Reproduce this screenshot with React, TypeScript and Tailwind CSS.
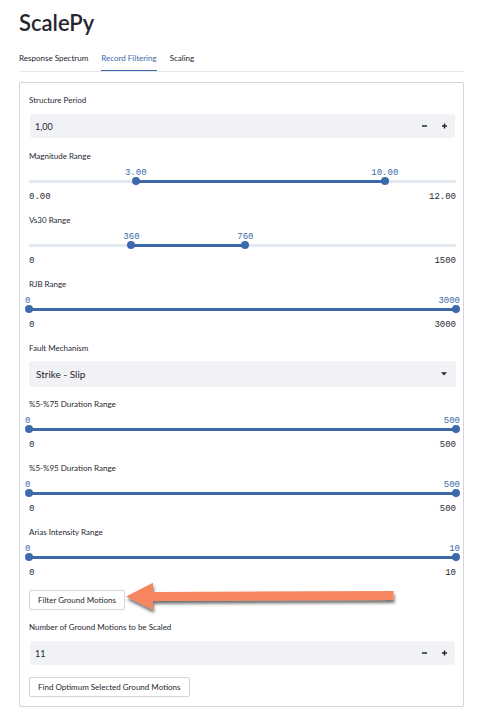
import { useState } from "react";
import type { ReactNode } from "react";

const tabs = ["Response Spectrum", "Record Filtering", "Scaling"];

function Label({ htmlFor, children }: { htmlFor?: string; children: ReactNode }) {
  return (
    <label htmlFor={htmlFor} className="block h-3 text-[8px] leading-3">
      {children}
    </label>
  );
}

function NumberField({ id, label, initial, decimals }: { id: string; label: string; initial: number; decimals: number }) {
  const [value, setValue] = useState(initial);
  return (
    <div className="flex flex-col gap-[7px]">
      <Label htmlFor={id}>{label}</Label>
      <div className="flex h-[26px] items-center overflow-hidden rounded border border-white bg-[#f0f2f6]">
        <input
          id={id}
          type="text"
          readOnly
          value={value.toFixed(decimals).replace(".", ",")}
          className="h-full min-w-0 flex-1 bg-transparent pl-[5px] text-[9px] outline-none"
        />
        <button type="button" aria-label="Decrease" onClick={() => setValue(value - 1)} className="flex h-full w-5 items-center justify-center">
          <svg viewBox="0 0 6 6" className="size-[6px]">
            <path d="M0 3h5" stroke="#262730" strokeWidth="1.4" />
          </svg>
        </button>
        <button type="button" aria-label="Increase" onClick={() => setValue(value + 1)} className="flex h-full w-5 items-center justify-center">
          <svg viewBox="0 0 6 6" className="size-[6px]">
            <path d="M0 3h5M2.500 0.500v5" stroke="#262730" strokeWidth="1.4" />
          </svg>
        </button>
      </div>
    </div>
  );
}

const thumbInput =
  "pointer-events-none absolute -left-1 top-0 h-2 w-[calc(100%+8px)] appearance-none bg-transparent [&::-webkit-slider-thumb]:pointer-events-auto [&::-webkit-slider-thumb]:size-2 [&::-webkit-slider-thumb]:appearance-none [&::-webkit-slider-thumb]:rounded-full [&::-webkit-slider-thumb]:bg-[#3c69ab]";

function ThumbValue({ percent, text }: { percent: number; text: string }) {
  if (percent <= 0) return <span className="absolute -left-1 top-0">{text}</span>;
  if (percent >= 100) return <span className="absolute -right-1 top-0">{text}</span>;
  return (
    <span className="absolute top-0 -translate-x-1/2" style={{ left: `${percent}%` }}>
      {text}
    </span>
  );
}

function RangeField({ id, label, max, from, to, decimals = 0 }: { id: string; label: string; max: number; from: number; to: number; decimals?: number }) {
  const [low, setLow] = useState(from);
  const [high, setHigh] = useState(to);
  const lowPercent = (low / max) * 100;
  const highPercent = (high / max) * 100;
  const step = decimals ? 0.01 : 1;
  return (
    <div>
      <Label htmlFor={id}>{label}</Label>
      <div className="relative mt-[5px] h-[10px] font-['Liberation_Mono',monospace] text-[9px] leading-3 text-[#3c69ab]">
        <ThumbValue percent={lowPercent} text={low.toFixed(decimals)} />
        <ThumbValue percent={highPercent} text={high.toFixed(decimals)} />
      </div>
      <div className="relative h-2">
        <div className="flex h-full items-center">
          <div className="h-[3px] w-full overflow-hidden rounded-sm bg-[#e3e7ef]">
            <div className="h-full bg-[#3c69ab]" style={{ marginLeft: `${lowPercent}%`, width: `${highPercent - lowPercent}%` }} />
          </div>
        </div>
        <input id={id} type="range" min={0} max={max} step={step} value={low} onChange={(e) => setLow(Math.min(Number(e.target.value), high))} className={thumbInput} />
        <input aria-label={`${label} maximum`} type="range" min={0} max={max} step={step} value={high} onChange={(e) => setHigh(Math.max(Number(e.target.value), low))} className={thumbInput} />
      </div>
      <div className="mt-[6px] flex h-3 justify-between font-['Liberation_Mono',monospace] text-[9px] leading-3">
        <span>{(0).toFixed(decimals)}</span>
        <span>{max.toFixed(decimals)}</span>
      </div>
    </div>
  );
}

function ActionButton({ children }: { children: ReactNode }) {
  return (
    <button type="button" className="h-5 rounded-xs border border-[#d4d5d8] bg-white px-2 text-[8px] leading-3 whitespace-nowrap">
      {children}
    </button>
  );
}

function PointerArrow() {
  return (
    <svg width="280" height="40" viewBox="0 0 280 40" className="pointer-events-none absolute -top-3 left-[94px]" aria-hidden="true">
      <defs>
        <filter id="arrow-shadow" x="-10%" y="-30%" width="120%" height="180%">
          <feDropShadow dx="1" dy="3" stdDeviation="1.6" floodColor="#000000" floodOpacity="0.55" />
        </filter>
      </defs>
      <path d="M3 18.500L30 4.800V14L270.500 13V22L30 23V32Z" fill="#f58661" filter="url(#arrow-shadow)" />
    </svg>
  );
}

export default function App() {
  const [active, setActive] = useState(1);
  return (
    <main className="bg-white px-[19px] pt-2 pb-[14px] font-[Lato,sans-serif] text-[#262730]">
      <h1 className="text-[22px] leading-[30px] font-semibold">ScalePy</h1>
      <nav role="tablist" className="mt-3 flex h-[22px] gap-[13px] border-b border-[#e6e7ea]">
        {tabs.map((tab, index) => (
          <button
            key={tab}
            type="button"
            role="tab"
            aria-selected={active === index}
            onClick={() => setActive(index)}
            className={`h-[21px] border-b pb-1 text-[8px] leading-3 whitespace-nowrap ${active === index ? "border-[#3c69ab] text-[#3c69ab]" : "border-transparent"}`}
          >
            {tab}
          </button>
        ))}
      </nav>
      <form className="mt-[10px] flex flex-col gap-[11px] rounded-xs border border-[#d4d5d8] pt-[11px] pr-[7px] pb-[9px] pl-[9px]" onSubmit={(e) => e.preventDefault()}>
        <NumberField id="period" label="Structure Period" initial={1} decimals={2} />
        <RangeField id="magnitude" label="Magnitude Range" max={12} from={3} to={10} decimals={2} />
        <RangeField id="vs30" label="Vs30 Range" max={1500} from={360} to={760} />
        <RangeField id="rjb" label="RJB Range" max={3000} from={0} to={3000} />
        <div className="flex flex-col gap-[7px]">
          <Label htmlFor="mechanism">Fault Mechanism</Label>
          <div className="relative">
            <select id="mechanism" className="block h-[26px] w-full appearance-none rounded-xs bg-[#f0f2f6] pl-[7px] text-[10px] outline-none">
              <option>Strike - Slip</option>
              <option>Normal</option>
              <option>Reverse</option>
            </select>
            <svg viewBox="0 0 6 4" className="pointer-events-none absolute top-[11px] right-[9px] h-1 w-[6px]" aria-hidden="true">
              <path d="M0 0.300H6L3 3.600Z" fill="#262730" />
            </svg>
          </div>
        </div>
        <RangeField id="duration75" label="%5-%75 Duration Range" max={500} from={0} to={500} />
        <RangeField id="duration95" label="%5-%95 Duration Range" max={500} from={0} to={500} />
        <RangeField id="arias" label="Arias Intensity Range" max={10} from={0} to={10} />
        <div className="relative flex">
          <ActionButton>Filter Ground Motions</ActionButton>
          <PointerArrow />
        </div>
        <NumberField id="count" label="Number of Ground Motions to be Scaled" initial={11} decimals={0} />
        <div className="flex">
          <ActionButton>Find Optimum Selected Ground Motions</ActionButton>
        </div>
      </form>
    </main>
  );
}
